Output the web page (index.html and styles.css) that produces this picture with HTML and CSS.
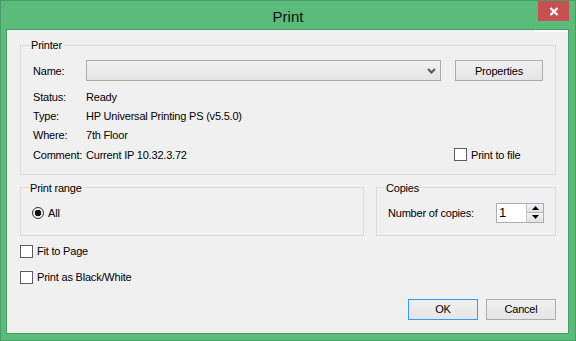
FILE: index.html
```html
<!DOCTYPE html>
<html lang="en-US"><head>
<meta charset="utf-8">
<title>Print</title>
<link rel="stylesheet" href="styles.css">
</head><body>

<div class="window">
	<div class="titlebar">
		<span class="title">Print</span>
		<button class="close" title="Close"><svg width="10" height="9" viewBox="0 0 10 9"><path d="M1.5 1 L8.5 8 M8.5 1 L1.5 8" stroke="#fff" stroke-width="2.2" fill="none"/></svg></button>
	</div>

	<div class="client">
		<fieldset class="group printer">
			<legend>Printer</legend>
			<div class="name-row">
				<span>Name:</span>
				<div class="combo"><svg class="chevron" width="9" height="6" viewBox="0 0 9 6"><path d="M1 1 L4.5 4.5 L8 1" stroke="#555" stroke-width="2" fill="none"/></svg></div>
				<button class="btn">Properties</button>
			</div>
			<div class="info">
				<span>Status:</span><span class="wide">Ready</span>
				<span>Type:</span><span class="wide">HP Universal Printing PS (v5.5.0)</span>
				<span>Where:</span><span class="wide">7th Floor</span>
				<span>Comment:</span><span>Current IP 10.32.3.72</span>
				<label class="check"><span class="box"></span>Print to file</label>
			</div>
		</fieldset>

		<div class="groups">
			<fieldset class="group range">
				<legend>Print range</legend>
				<label class="radio"><span class="dot"></span>All</label>
			</fieldset>
			<fieldset class="group copies">
				<legend>Copies</legend>
				<div class="copies-row">
					<span>Number of copies:</span>
					<div class="spin">
						<span class="spin-value">1</span>
						<span class="spin-buttons">
							<span class="spin-up"><svg width="7" height="4" viewBox="0 0 7 4"><path d="M3.5 0 L7 4 L0 4 Z" fill="#000"/></svg></span>
							<span class="spin-down"><svg width="7" height="4" viewBox="0 0 7 4"><path d="M0 0 L7 0 L3.5 4 Z" fill="#000"/></svg></span>
						</span>
					</div>
				</div>
			</fieldset>
		</div>

		<label class="check option"><span class="box"></span>Fit to Page</label>
		<label class="check option"><span class="box"></span>Print as Black/White</label>

		<div class="actions">
			<button class="btn default">OK</button>
			<button class="btn">Cancel</button>
		</div>
	</div>
</div>

</body></html>
```

FILE: styles.css
```css
body {
	margin : 0 ;
	font-family : "Liberation Sans", Arial, sans-serif ;
	font-size : 11px ;
	letter-spacing : -0.2px ;
	color : #000 ;
	}
.window {
	width : 576px ;
	height : 341px ;
	box-sizing : border-box ;
	border : 1px solid #4a9d66 ;
	background : #5bbb7a ;
	display : flex ;
	flex-direction : column ;
	}
.titlebar {
	height : 28px ;
	position : relative ;
	display : flex ;
	justify-content : center ;
	align-items : center ;
	}
.title {
	font-size : 15px ;
	letter-spacing : 0 ;
	color : #111 ;
	padding-top : 3px ;
	}
.close {
	position : absolute ;
	top : 0 ;
	right : 6px ;
	width : 31px ;
	height : 20px ;
	border : 0 ;
	padding : 0 ;
	background : #c75050 ;
	display : flex ;
	align-items : center ;
	justify-content : center ;
	}
.client {
	flex : 1 ;
	margin : 0 6px 6px 5px ;
	border : 1px solid #4a9d66 ;
	background : #f0f0f0 ;
	padding : 0 12px 0 13px ;
	display : flex ;
	flex-direction : column ;
	position : relative ;
	}
.client::before {
	content : "" ;
	position : absolute ;
	top : 0 ;
	right : 0 ;
	width : 33px ;
	height : 2px ;
	background : #fff ;
	}

/* group boxes */
.group {
	margin : 0 ;
	border : 1px solid #dcdcdc ;
	min-width : 0 ;
	}
.group legend {
	padding : 0 1px ;
	margin-left : -3px ;
	line-height : 14px ;
	}
.printer {
	margin-top : 8px ;
	padding : 8px 12px 9px 12px ;
	}
.name-row {
	display : grid ;
	grid-template-columns : 53px 355px 1fr ;
	align-items : center ;
	height : 21px ;
	}
.name-row .btn { margin-left : 14px ; }
.combo {
	height : 21px ;
	box-sizing : border-box ;
	border : 1px solid #acacac ;
	background : linear-gradient( #f2f2f2, #e4e4e4 ) ;
	display : flex ;
	align-items : center ;
	justify-content : flex-end ;
	padding-right : 4px ;
	}
.info {
	margin-top : 6px ;
	display : grid ;
	grid-template-columns : 53px 368px 1fr ;
	grid-auto-rows : 19.4px ;
	align-items : center ;
	}
.info .wide { grid-column : span 2 ; }

.btn {
	height : 21px ;
	box-sizing : border-box ;
	border : 1px solid #acacac ;
	background : linear-gradient( #f0f0f0, #e5e5e5 ) ;
	font : inherit ;
	letter-spacing : inherit ;
	color : #000 ;
	padding : 0 ;
	}
.btn.default { border-color : #3399ff ; }

/* check boxes and radios */
.check {
	display : flex ;
	align-items : center ;
	gap : 4px ;
	}
.box {
	width : 13px ;
	height : 13px ;
	box-sizing : border-box ;
	border : 1px solid #5c5c5c ;
	background : #fff ;
	}
.radio {
	display : flex ;
	align-items : center ;
	gap : 4px ;
	height : 20px ;
	}
.dot {
	width : 12px ;
	height : 12px ;
	box-sizing : border-box ;
	border : 1px solid #333 ;
	border-radius : 50% ;
	background : radial-gradient( circle, #111 0 3px, #e8e8e8 3.5px, #fafafa ) ;
	}

.groups {
	margin-top : 6px ;
	display : grid ;
	grid-template-columns : 344px 1fr ;
	column-gap : 12px ;
	}
.range {
	padding : 8px 11px 12px 11px ;
	}
.copies {
	padding : 8px 11px 12px 11px ;
	}
.copies-row {
	display : flex ;
	align-items : center ;
	justify-content : space-between ;
	height : 20px ;
	}
.spin {
	width : 48px ;
	height : 20px ;
	box-sizing : border-box ;
	border : 1px solid #abadb3 ;
	background : #fff ;
	display : flex ;
	}
.spin-value {
	flex : 1 ;
	font-size : 13px ;
	line-height : 18px ;
	padding-left : 2px ;
	}
.spin-buttons {
	width : 16px ;
	border-left : 1px solid #c8c8c8 ;
	display : flex ;
	flex-direction : column ;
	}
.spin-buttons span {
	flex : 1 ;
	display : flex ;
	align-items : center ;
	justify-content : center ;
	background : linear-gradient( #f2f2f2, #e2e2e2 ) ;
	}
.spin-up { border-bottom : 1px solid #b8b8b8 ; }

.option { height : 13px ; }
.option:first-of-type { margin-top : 9px ; }
.option + .option { margin-top : 13px ; }

.actions {
	margin-top : 15px ;
	display : flex ;
	justify-content : flex-end ;
	gap : 8px ;
	}
.actions .btn { width : 70px ; }
```
